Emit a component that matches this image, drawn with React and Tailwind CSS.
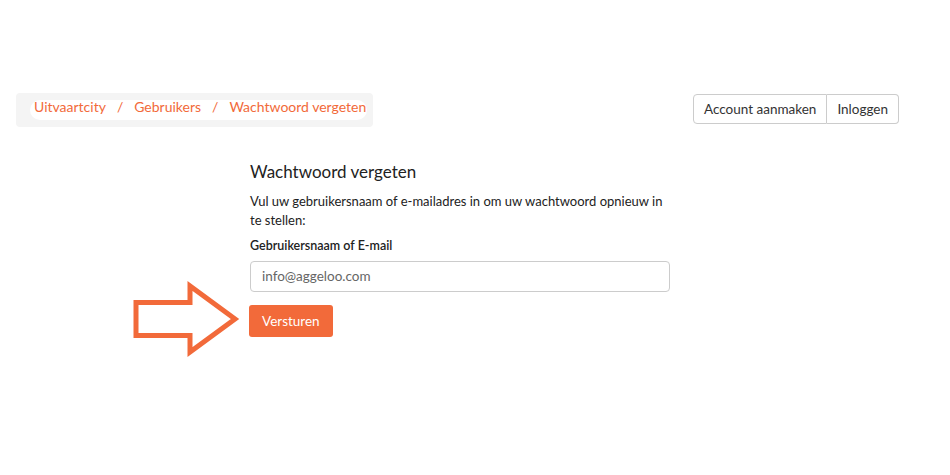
import React from 'react';

const ORANGE = '#f26a3a';

const Arrow = () => (
  <svg width="110" height="78" viewBox="0 0 110 78" className="shrink-0">
    <polygon
      points="3,21.5 57,21.5 57,5 102,38 57,71 57,54.5 3,54.5"
      fill="none"
      stroke={ORANGE}
      strokeWidth="5"
      strokeLinejoin="miter"
    />
  </svg>
);

const App = () => {
  return (
    <div className="w-[950px] h-[475px] bg-white font-['Lato','Open_Sans',sans-serif] text-[#222]">
      <div className="flex items-start justify-between pt-[93px] pl-4 pr-[51px]">
        <div className="relative w-[357px] h-[34px] rounded bg-[#f4f4f4] overflow-hidden">
          <div className="absolute left-[14px] right-[6px] top-[7px] h-[20px] rounded-full bg-white" />
          <nav className="relative flex items-center h-[26px] pl-[18px] text-[14px] text-[#f26a3a] whitespace-nowrap">
            <span>Uitvaartcity</span>
            <span className="px-[11px]">/</span>
            <span>Gebruikers</span>
            <span className="px-[11px]">/</span>
            <span>Wachtwoord vergeten</span>
          </nav>
        </div>
        <div className="flex mt-px text-[13.5px] text-[#333]">
          <button className="h-[30px] px-[10px] border border-[#ccc] rounded-l bg-white">Account aanmaken</button>
          <button className="h-[30px] px-[10px] border border-l-0 border-[#ccc] rounded-r bg-white">Inloggen</button>
        </div>
      </div>

      <div className="ml-[250px] mt-[33px] w-[420px]">
        <h1 className="text-[17px] leading-[24px] text-[#222]">Wachtwoord vergeten</h1>
        <p className="mt-[8px] text-[13px] leading-[19px] text-[#222]">
          Vul uw gebruikersnaam of e-mailadres in om uw wachtwoord opnieuw in te stellen:
        </p>
        <label className="block mt-[7px] text-[12.5px] font-semibold leading-[18px]">Gebruikersnaam of E-mail</label>
        <div className="mt-[6px] h-[31px] w-[420px] flex items-center px-[11px] border border-[#ccc] rounded text-[13.5px] text-[#666]">
          info@aggeloo.com
        </div>
        <div className="relative mt-[13px]">
          <div className="absolute left-[-117px] top-[-24px]">
            <Arrow />
          </div>
          <button className="h-[32px] px-[13px] ml-[-1px] rounded-[3px] bg-[#f26a3a] text-white text-[13.5px]">Versturen</button>
        </div>
      </div>
    </div>
  );
};

export default App;
